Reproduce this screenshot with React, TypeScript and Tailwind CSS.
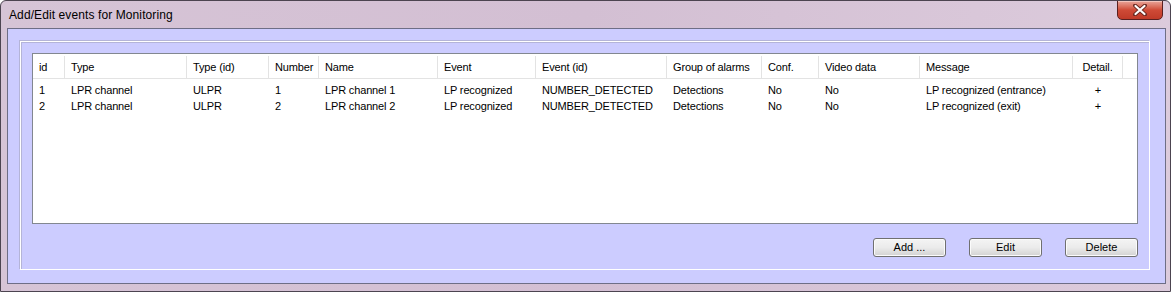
import React from 'react';

const columns = [
  { key: 'id', label: 'id', width: 32 },
  { key: 'type', label: 'Type', width: 122 },
  { key: 'typeId', label: 'Type (id)', width: 82 },
  { key: 'number', label: 'Number', width: 50 },
  { key: 'name', label: 'Name', width: 119 },
  { key: 'event', label: 'Event', width: 98 },
  { key: 'eventId', label: 'Event (id)', width: 131 },
  { key: 'group', label: 'Group of alarms', width: 95 },
  { key: 'conf', label: 'Conf.', width: 57 },
  { key: 'video', label: 'Video data', width: 101 },
  { key: 'message', label: 'Message', width: 153 },
  { key: 'detail', label: 'Detail.', width: 50, center: true },
];

const rows: Record<string, string>[] = [
  {
    id: '1', type: 'LPR channel', typeId: 'ULPR', number: '1', name: 'LPR channel 1',
    event: 'LP recognized', eventId: 'NUMBER_DETECTED', group: 'Detections', conf: 'No',
    video: 'No', message: 'LP recognized (entrance)', detail: '+',
  },
  {
    id: '2', type: 'LPR channel', typeId: 'ULPR', number: '2', name: 'LPR channel 2',
    event: 'LP recognized', eventId: 'NUMBER_DETECTED', group: 'Detections', conf: 'No',
    video: 'No', message: 'LP recognized (exit)', detail: '+',
  },
];

function Button({ label }: { label: string }) {
  return (
    <button className="w-[73px] h-[19px] rounded-[3px] border border-[#707070] bg-gradient-to-b from-[#f4f4f4] via-[#ebebeb] to-[#d2d2d2] text-[11px] leading-none text-black shadow-[inset_0_0_0_1px_#fbfbfb]">
      {label}
    </button>
  );
}

export default function App() {
  return (
    <div
      className="w-[1171px] h-[292px] flex flex-col bg-gradient-to-r from-[#d6c4d6] via-[#d3bfd3] to-[#dccbdc] border border-[#4c4450] rounded-t-[6px] overflow-hidden"
      style={{ fontFamily: '"Liberation Sans", Arial, sans-serif' }}
    >
      {/* Title bar */}
      <div className="h-[28px] flex items-center justify-between pl-[8px] pr-[7px]">
        <span className="text-[12px] text-black tracking-[0.1px]">Add/Edit events for Monitoring</span>
        <div className="self-start -mt-px w-[46px] h-[20px] rounded-b-[5px] border border-[#5a2020] bg-gradient-to-b from-[#e8a59a] via-[#cf4a36] to-[#c03a28] flex items-center justify-center shadow-[inset_0_1px_0_#f3c4bc]">
          <svg width="14" height="12" viewBox="0 0 14 12">
            <path d="M2 1.5 L12 10.5 M12 1.5 L2 10.5" stroke="#6b2a22" strokeWidth="4" strokeLinecap="round" />
            <path d="M2.5 2 L11.5 10 M11.5 2 L2.5 10" stroke="#ffffff" strokeWidth="2.2" strokeLinecap="round" />
          </svg>
        </div>
      </div>

      {/* Client area */}
      <div className="ml-[6px] mr-[4px] mb-[7px] flex-1 bg-[#ccccff] border border-[#6e6e86] pt-[12px] pl-[12px] pr-[15px] pb-[13px] flex">
        {/* Group box */}
        <div className="flex-1 border border-white shadow-[inset_1px_1px_0_#b4b4d8,-1px_-1px_0_#b4b4d8] flex flex-col pt-[11px] px-[11px] pb-[12px]">
          {/* List view */}
          <div className="h-[171px] bg-white border border-[#828790] text-[11px] tracking-[-0.15px] text-black">
            <div className="flex h-[25px] pt-[2px] border-b border-[#e3e3e3]">
              {columns.map((c) => (
                <div
                  key={c.key}
                  className={`shrink-0 flex items-center border-r border-[#e3e3e3] ${c.center ? 'justify-center' : 'pl-[6px]'}`}
                  style={{ width: c.width }}
                >
                  {c.label}
                </div>
              ))}
              <div className="flex-1" />
            </div>
            <div className="pt-[3px]">
              {rows.map((r) => (
                <div key={r.id} className="flex h-[16px] items-center">
                  {columns.map((c) => (
                    <div
                      key={c.key}
                      className={`shrink-0 whitespace-nowrap ${c.center ? 'text-center' : 'pl-[6px]'}`}
                      style={{ width: c.width }}
                    >
                      {r[c.key]}
                    </div>
                  ))}
                </div>
              ))}
            </div>
          </div>

          {/* Buttons */}
          <div className="mt-[14px] flex justify-end gap-[23px]">
            <Button label="Add ..." />
            <Button label="Edit" />
            <Button label="Delete" />
          </div>
        </div>
      </div>
    </div>
  );
}
